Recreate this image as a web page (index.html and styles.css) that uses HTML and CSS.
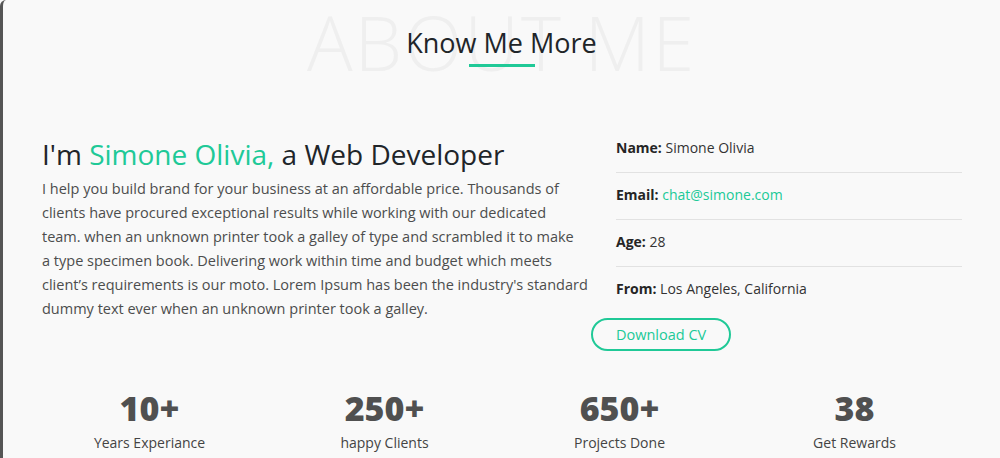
FILE: index.html
```html
<!DOCTYPE html>
<html>

<head>
    <meta charset="utf-8" />
    <title>About Me</title>
    <link rel="stylesheet" href="styles.css">
</head>

<body>
    <div class="page">
        <div class="section-title">
            <span class="bg-title">ABOUT ME</span>
            <h2 class="title">Know Me More</h2>
            <span class="title-line"></span>
        </div>

        <div class="about">
            <div class="about-text">
                <h3>I'm <span class="green">Simone Olivia,</span> a Web Developer</h3>
                <p>I help you build brand for your business at an affordable price. Thousands of<br>
                    clients have procured exceptional results while working with our dedicated<br>
                    team. when an unknown printer took a galley of type and scrambled it to make<br>
                    a type specimen book. Delivering work within time and budget which meets<br>
                    client’s requirements is our moto. Lorem Ipsum has been the industry's standard<br>
                    dummy text ever when an unknown printer took a galley.</p>
            </div>
            <div class="about-info">
                <ul>
                    <li><b>Name:</b> Simone Olivia</li>
                    <li><b>Email:</b> <a href="#">chat@simone.com</a></li>
                    <li><b>Age:</b> 28</li>
                    <li><b>From:</b> Los Angeles, California</li>
                </ul>
                <a class="btn" href="#">Download CV</a>
            </div>
        </div>

        <div class="stats">
            <div class="stat">
                <h4>10+</h4>
                <p>Years Experiance</p>
            </div>
            <div class="stat">
                <h4>250+</h4>
                <p>happy Clients</p>
            </div>
            <div class="stat">
                <h4>650+</h4>
                <p>Projects Done</p>
            </div>
            <div class="stat">
                <h4>38</h4>
                <p>Get Rewards</p>
            </div>
        </div>
    </div>
</body>

</html>
```

FILE: styles.css
```css
body {
    margin: 0;
    background: #f9f9f9;
    font-family: "Open Sans", "Noto Sans", sans-serif;
    color: #212529;
}

.page {
    /* bord gauche sombre comme dans la capture */
    border-left: 3px solid #555;
    border-top-left-radius: 6px;
    height: 458px;
    box-sizing: border-box;
    overflow: hidden;
}

.section-title {
    position: relative;
    text-align: center;
    height: 110px;
}

.bg-title {
    position: absolute;
    left: 0;
    right: 0;
    top: 0;
    font-size: 76px;
    line-height: 84px;
    font-weight: 300;
    color: #efefef;
    letter-spacing: 2px;
}

.title {
    position: relative;
    margin: 0;
    padding-top: 24px;
    font-size: 27px;
    line-height: 38px;
    font-weight: 400;
    color: #212529;
}

.title-line {
    position: relative;
    display: block;
    width: 66px;
    height: 3px;
    margin: 2px auto 0;
    background: #20c997;
}

.about {
    display: flex;
    padding-left: 39px;
}

.about-text {
    width: 536px;
    flex: none;
}

.about-text h3 {
    margin: 26px 0 0;
    font-size: 28px;
    line-height: 36px;
    font-weight: 400;
    color: #212529;
}

.green {
    color: #20c997;
}

.about-text p {
    /* retours à la ligne fixés pour coller à la maquette */
    margin: 5px 0 0;
    white-space: nowrap;
    font-size: 14.5px;
    line-height: 24px;
    color: #4c4d4d;
}

.about-info {
    width: 371px;
    margin-left: 13px;
}

.about-info ul {
    list-style: none;
    margin: 0;
    padding: 0 0 0 25px;
}

.about-info li {
    font-size: 14px;
    line-height: 24px;
    padding: 10px 0 12px;
    color: #333;
    border-bottom: 1px solid #e2e2e2;
}

.about-info li:first-child {
    padding-top: 126px;
    margin-top: -100px;
}

.about-info li:last-child {
    border-bottom: none;
}

.about-info b {
    font-weight: 700;
    color: #252525;
}

.about-info a {
    color: #20c997;
    text-decoration: none;
}

.about-info .btn {
    display: inline-block;
    margin-top: 5px;
    padding: 0 23px;
    height: 29px;
    line-height: 29px;
    border: 2px solid #20c997;
    border-radius: 17px;
    font-size: 14.5px;
    color: #20c997;
}

.stats {
    display: grid;
    grid-template-columns: repeat(4, 1fr);
    width: 940px;
    margin: 37px 0 0 29px;
    text-align: center;
}

.stat h4 {
    margin: 0;
    font-size: 34px;
    line-height: 40px;
    font-weight: 800;
    color: #505050;
}

.stat p {
    margin: 5px 0 0;
    font-size: 14px;
    line-height: 20px;
    color: #444;
}
```
